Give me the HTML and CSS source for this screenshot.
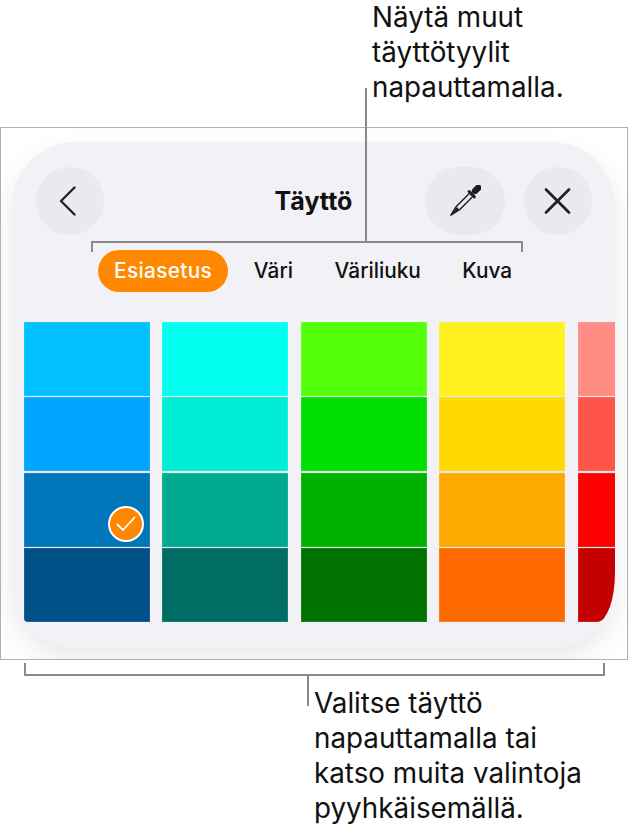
FILE: index.html
```html
<!DOCTYPE html>
<html lang="en">
<head>
  <meta charset="UTF-8" />
  <title>Täyttö</title>
  <link rel="stylesheet" href="styles.css">
</head>
<body>
  <p class="caption caption-top">Näytä muut<br>täyttötyylit<br>napauttamalla.</p>

  <div class="frame">
    <div class="panel">
      <div class="header">
        <button class="round">
          <svg width="24" height="30" viewBox="0 0 24 30"><path d="M16.500 1.500 3 15 16.500 28.500" fill="none" stroke="#222" stroke-width="2.300" stroke-linecap="round" stroke-linejoin="round"/></svg>
        </button>
        <h2>Täyttö</h2>
        <button class="round wide">
          <svg width="32" height="32" viewBox="0 0 32 32">
            <g transform="rotate(45 16 16)">
              <rect x="12.800" y="-6" width="6.400" height="11" rx="3.200" fill="#1c1c1e"/>
              <rect x="10.800" y="5" width="10.400" height="3" rx="1.500" fill="#1c1c1e"/>
              <path d="M13.700 8V26l2.300 10 2.300-10V8" fill="none" stroke="#1c1c1e" stroke-width="1.400" stroke-linejoin="round"/>
              <path d="M14.500 26h3L16 35z" fill="#1c1c1e"/>
            </g>
          </svg>
        </button>
        <button class="round">
          <svg width="28" height="28" viewBox="0 0 28 28"><path d="M2 2.500l23 23M25 2.500l-23 23" fill="none" stroke="#222" stroke-width="2.700" stroke-linecap="round"/></svg>
        </button>
      </div>

      <div class="tabs">
        <span class="tab active">Esiasetus</span>
        <span class="tab">Väri</span>
        <span class="tab">Väriliuku</span>
        <span class="tab">Kuva</span>
      </div>

      <div class="swatches">
        <div class="column">
          <div class="swatch c1"></div>
          <div class="swatch c2"></div>
          <div class="swatch c3">
            <span class="check">
              <svg width="22" height="22" viewBox="0 0 22 22"><path d="M2.500 11.500 8 17 19.500 4.500" fill="none" stroke="#fff" stroke-width="1.800" stroke-linecap="round" stroke-linejoin="round"/></svg>
            </span>
          </div>
          <div class="swatch c4"></div>
        </div>
        <div class="column">
          <div class="swatch c5"></div>
          <div class="swatch c6"></div>
          <div class="swatch c7"></div>
          <div class="swatch c8"></div>
        </div>
        <div class="column">
          <div class="swatch c9"></div>
          <div class="swatch c10"></div>
          <div class="swatch c11"></div>
          <div class="swatch c12"></div>
        </div>
        <div class="column">
          <div class="swatch c13"></div>
          <div class="swatch c14"></div>
          <div class="swatch c15"></div>
          <div class="swatch c16"></div>
        </div>
        <div class="column">
          <div class="swatch c17"></div>
          <div class="swatch c18"></div>
          <div class="swatch c19"></div>
          <div class="swatch c20"></div>
        </div>
      </div>
    </div>
  </div>

  <p class="caption caption-bottom">Valitse täyttö<br>napauttamalla tai<br>katso muita valintoja<br>pyyhkäisemällä.</p>

  <!-- callout lines sit over the picture -->
  <div class="line line-top"></div>
  <div class="bracket bracket-top"></div>
  <div class="bracket bracket-bottom"></div>
  <div class="line line-bottom"></div>
</body>
</html>
```

FILE: styles.css
```css
body {
  margin: 0;
  position: relative;
  height: 830px;
  overflow: hidden;
  background: #fff;
  color: #111;
  font-family: Inter, "Liberation Sans", sans-serif;
}

.caption {
  margin: 0;
  font-size: 27.800px;
  line-height: 35px;
}

.caption-top {
  height: 127px;
  padding-left: 372px;
  box-sizing: border-box;
}

.caption-bottom {
  margin-top: 26px;
  padding-left: 314px;
}

.frame {
  height: 533px;
  box-sizing: border-box;
  border: 1px solid #b0b0b0;
  padding: 14px 12px 10px 11px;
  background: #fff;
  overflow: hidden;
}

.panel {
  height: 506px;
  box-sizing: border-box;
  padding: 25px 0 0 12px;
  background: #f1f1f6;
  border-radius: 64px;
  box-shadow: 0 12px 30px rgba(0, 0, 0, 0.09);
}

.header {
  display: flex;
  align-items: center;
  padding: 0 23px 0 12px;
}

.header h2 {
  flex: 1;
  margin: 0;
  font-size: 25px;
  font-weight: 700;
  text-align: center;
  padding-left: 98px;
}

.round {
  display: flex;
  align-items: center;
  justify-content: center;
  width: 68px;
  height: 68px;
  padding: 0;
  border: none;
  border-radius: 34px;
  background: #e9e9ee;
}

.wide {
  width: 80px;
  margin-right: 19px;
}

.tabs {
  display: flex;
  gap: 9.500px;
  margin: 15px 0 30px 74px;
}

.tab {
  height: 42px;
  padding: 0 16px;
  border-radius: 21px;
  font-size: 20.800px;
  font-weight: 500;
  line-height: 42px;
}

.active {
  background: #ff8800;
  color: #fff;
  letter-spacing: 0.350px;
}

.swatches {
  display: flex;
  gap: 12.450px;
  height: 300px;
  overflow: hidden;
  border-bottom-left-radius: 4px;
  border-bottom-right-radius: 18px 50px;
}

.column {
  flex: 0 0 126px;
  display: grid;
  grid-template-rows: repeat(4, 1fr);
  gap: 1.500px;
  background: #e8e8ea;
}

.swatch {
  position: relative;
  box-shadow: inset 0 0 0 1px rgba(255, 255, 255, 0.1);
}

.c1 { background: #00c0ff; }
.c2 { background: #00a5ff; }
.c3 { background: #0077bb; }
.c4 { background: #005087; }
.c5 { background: #00ffee; }
.c6 { background: #00eed5; }
.c7 { background: #00aa90; }
.c8 { background: #006d65; }
.c9 { background: #55ff0a; }
.c10 { background: #00e000; }
.c11 { background: #00b200; }
.c12 { background: #007200; }
.c13 { background: #fff020; }
.c14 { background: #ffd900; }
.c15 { background: #ffaa00; }
.c16 { background: #ff6a00; }
.c17 { background: #ff8c85; }
.c18 { background: #ff5548; }
.c19 { background: #ff0000; }
.c20 { background: #c40000; }

.check {
  position: absolute;
  right: 6px;
  bottom: 5px;
  display: flex;
  align-items: center;
  justify-content: center;
  width: 32px;
  height: 32px;
  border: 2px solid #fff;
  border-radius: 50%;
  background: #ff8800;
}

.line {
  position: absolute;
  width: 2px;
  background: #8a8a8a;
}

.line-top {
  left: 365px;
  top: 88px;
  height: 154px;
}

.line-bottom {
  left: 307px;
  top: 675px;
  height: 31px;
}

.bracket {
  position: absolute;
  box-sizing: border-box;
  border: 2px solid #8a8a8a;
}

.bracket-top {
  left: 91px;
  top: 241px;
  width: 432px;
  height: 11px;
  border-bottom: none;
}

.bracket-bottom {
  left: 24px;
  top: 663px;
  width: 581px;
  height: 13px;
  border-top: none;
}
```
